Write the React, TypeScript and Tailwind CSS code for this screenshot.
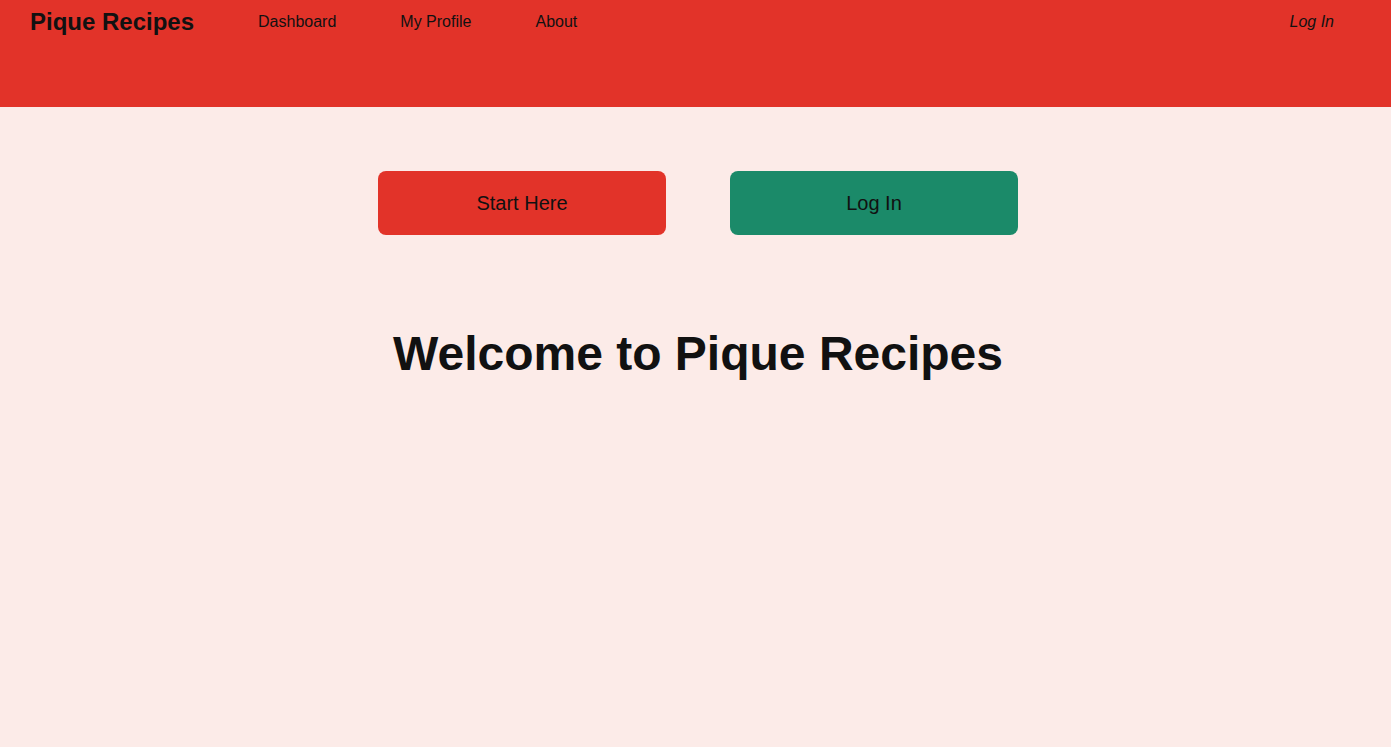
export default function App() {
  return (
    <div
      className="min-h-screen w-full bg-[#fcebe8] text-[#111111]"
      style={{ fontFamily: '"Liberation Sans", Arial, Helvetica, sans-serif' }}
    >
      {/* navbar */}
      <header className="flex h-[107px] items-start bg-[#e23329] pl-[30px] pr-[57px]">
        <a href="#" className="pt-[6px] text-2xl font-bold leading-8">
          Pique Recipes
        </a>
        <nav className="ml-16 flex gap-16 pt-[10px] text-base leading-6">
          <a href="#">Dashboard</a>
          <a href="#">My Profile</a>
          <a href="#">About</a>
        </nav>
        <a href="#" className="ml-auto pt-[10px] text-base italic leading-6">
          Log In
        </a>
      </header>

      {/* hero */}
      <main className="flex flex-col items-center pl-[5px] pt-16">
        <div className="flex gap-16">
          <button className="h-16 w-[288px] rounded-lg bg-[#e23329] text-xl">
            Start Here
          </button>
          <button className="h-16 w-[288px] rounded-lg bg-[#1b8a69] text-xl">
            Log In
          </button>
        </div>
        <h1 className="mt-[95px] text-5xl font-bold leading-none">
          Welcome to Pique Recipes
        </h1>
      </main>
    </div>
  );
}
